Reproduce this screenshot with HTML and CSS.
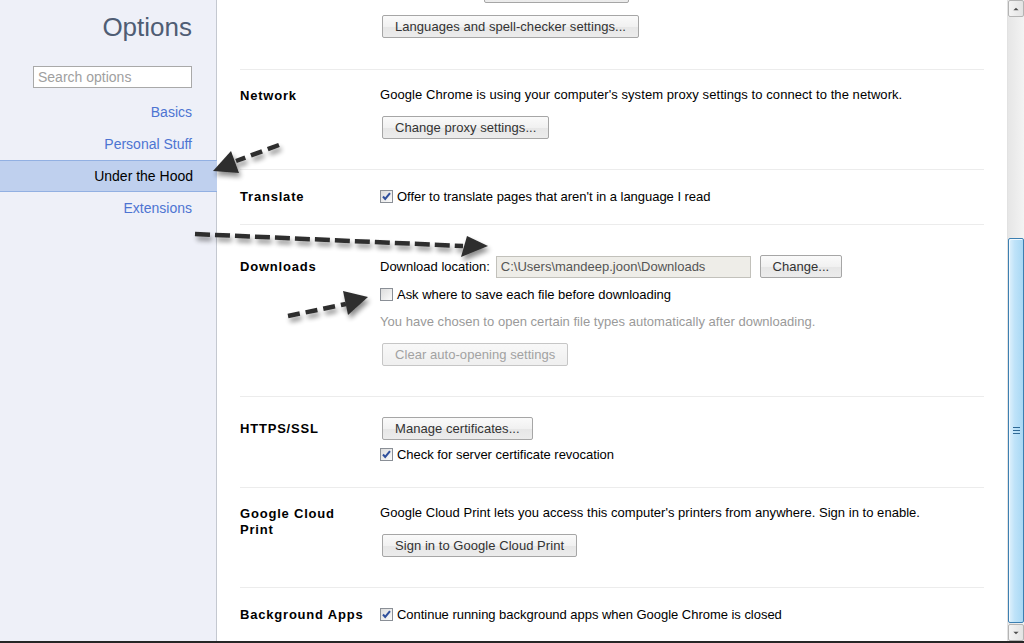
FILE: index.html
```html
<!DOCTYPE html>
<html>
<head>
<meta charset="utf-8">
<title>Options - Under the Hood</title>
<link rel="stylesheet" href="styles.css">
</head>
<body>
<div class="app">
  <aside class="sidebar">
    <h1 class="title">Options</h1>
    <div class="search-wrap"><input class="search" type="text" placeholder="Search options"></div>
    <nav class="nav">
      <a class="nav-item">Basics</a>
      <a class="nav-item">Personal Stuff</a>
      <a class="nav-item active">Under the Hood</a>
      <a class="nav-item">Extensions</a>
    </nav>
  </aside>

  <main class="main">
    <div class="content">
      <section class="section sec-first">
        <div class="label"></div>
        <div class="body">
          <button class="btn btn-fonts" aria-label="Customize fonts"></button>
          <button class="btn gap12">Languages and spell-checker settings...</button>
        </div>
      </section>

      <section class="section sec-network">
        <div class="label">Network</div>
        <div class="body">
          <div class="line wide">Google Chrome is using your computer's system proxy settings to connect to the network.</div>
          <button class="btn gap13">Change proxy settings...</button>
        </div>
      </section>

      <section class="section sec-translate">
        <div class="label">Translate</div>
        <div class="body">
          <label class="check-line"><span class="cb checked"><svg viewBox="0 0 13 13" width="13" height="13"><path d="M3 6.5 L5.2 9 L10 3.2" fill="none" stroke="#2f4f9c" stroke-width="2"/></svg></span>Offer to translate pages that aren't in a language I read</label>
        </div>
      </section>

      <section class="section sec-downloads">
        <div class="label label-mid">Downloads</div>
        <div class="body">
          <div class="dl-row">
            <span class="dl-label">Download location:</span>
            <span class="path">C:\Users\mandeep.joon\Downloads</span>
            <button class="btn btn-change">Change...</button>
          </div>
          <label class="check-line gap8"><span class="cb"></span>Ask where to save each file before downloading</label>
          <div class="line muted gap12">You have chosen to open certain file types automatically after downloading.</div>
          <button class="btn disabled gap13">Clear auto-opening settings</button>
        </div>
      </section>

      <section class="section sec-https">
        <div class="label label-mid">HTTPS/SSL</div>
        <div class="body">
          <button class="btn">Manage certificates...</button>
          <label class="check-line gap6"><span class="cb checked"><svg viewBox="0 0 13 13" width="13" height="13"><path d="M3 6.5 L5.2 9 L10 3.2" fill="none" stroke="#2f4f9c" stroke-width="2"/></svg></span>Check for server certificate revocation</label>
        </div>
      </section>

      <section class="section sec-cloud">
        <div class="label">Google Cloud<br>Print</div>
        <div class="body">
          <div class="line">Google Cloud Print lets you access this computer's printers from anywhere. Sign in to enable.</div>
          <button class="btn gap13">Sign in to Google Cloud Print</button>
        </div>
      </section>

      <section class="section sec-bg">
        <div class="label">Background Apps</div>
        <div class="body">
          <label class="check-line"><span class="cb checked"><svg viewBox="0 0 13 13" width="13" height="13"><path d="M3 6.5 L5.2 9 L10 3.2" fill="none" stroke="#2f4f9c" stroke-width="2"/></svg></span>Continue running background apps when Google Chrome is closed</label>
        </div>
      </section>
    </div>
  </main>

  <div class="scrollbar">
    <div class="sb-btn"><svg viewBox="0 0 16 16" width="16" height="16"><path d="M5 9.5 L8 6.5 L11 9.5 Z" fill="#4d4d4d"/></svg></div>
    <div class="sb-track">
      <div class="sb-thumb"><span class="grip"></span></div>
    </div>
    <div class="sb-btn"><svg viewBox="0 0 16 16" width="16" height="16"><path d="M5 6.5 L8 9.5 L11 6.5 Z" fill="#4d4d4d"/></svg></div>
  </div>
</div>
<div class="bottom-bar"></div>

<svg class="arrows" width="1024" height="643" viewBox="0 0 1024 643">
  <defs>
    <filter id="shadow" x="-20%" y="-50%" width="140%" height="200%">
      <feGaussianBlur in="SourceAlpha" stdDeviation="2.5"/>
      <feOffset dx="2" dy="4" result="b"/>
      <feComponentTransfer><feFuncA type="linear" slope="0.45"/></feComponentTransfer>
      <feMerge><feMergeNode/><feMergeNode in="SourceGraphic"/></feMerge>
    </filter>
  </defs>
  <g filter="url(#shadow)" fill="#2e2e2e" stroke="#2e2e2e">
    <line x1="279" y1="145" x2="236" y2="161" stroke-width="4.5" stroke-dasharray="12 6" fill="none"/>
    <polygon points="213,171 231,151 239,173" stroke="none"/>
    <line x1="195" y1="234" x2="463" y2="246" stroke-width="4.5" stroke-dasharray="15 5" fill="none"/>
    <polygon points="467,236 488,246 461,257" stroke="none"/>
    <line x1="288" y1="316" x2="346" y2="304" stroke-width="4.5" stroke-dasharray="12 6" fill="none"/>
    <polygon points="343,291 368,297 348,315" stroke="none"/>
  </g>
</svg>
</body>
</html>
```

FILE: styles.css
```css
* { box-sizing: border-box; }

html, body {
  margin: 0;
  padding: 0;
  width: 1024px;
  height: 643px;
  overflow: hidden;
  font-family: "Liberation Sans", Arial, sans-serif;
  font-size: 13px;
  color: #000;
  background: #fff;
}

.app {
  display: flex;
  height: 641px;
  position: relative;
}

/* Sidebar */
.sidebar {
  width: 217px;
  flex: 0 0 217px;
  background: #eef0f8;
  border-right: 1px solid #c4c8d0;
  display: flex;
  flex-direction: column;
}

.title {
  margin: 0;
  padding: 11px 24px 0 0;
  text-align: right;
  font-weight: normal;
  font-size: 26px;
  line-height: 32px;
  color: #4f5d74;
}

.search-wrap {
  padding: 23px 24px 0 33px;
}

.search {
  display: block;
  width: 159px;
  height: 22px;
  border: 1px solid #a9a9a9;
  background: #fff;
  padding: 0 0 0 4px;
  font-family: "Liberation Sans", Arial, sans-serif;
  font-size: 14px;
  color: #333;
  outline: none;
}
.search::placeholder { color: #a0a0a0; }

.nav {
  display: flex;
  flex-direction: column;
  margin-top: 8px;
}

.nav-item {
  display: block;
  height: 32px;
  line-height: 32px;
  text-align: right;
  padding-right: 24px;
  font-size: 14px;
  color: #4d74d2;
}

.nav-item.active {
  background: #bfd0ee;
  border-top: 1px solid #92b0e2;
  border-bottom: 1px solid #92b0e2;
  line-height: 30px;
  color: #000;
  margin-right: -1px;
}

/* Main */
.main {
  flex: 1;
  background: #fff;
  overflow: hidden;
}

.content {
  padding: 0 23px;
}

.section {
  display: grid;
  grid-template-columns: 140px 1fr;
  border-top: 1px solid #ececec;
}

.label {
  font-weight: bold;
  font-size: 13px;
  letter-spacing: 0.8px;
  line-height: 16px;
  color: #000;
  padding-top: 1px;
}
.label-mid { margin-top: 3px; }

.body {
  display: flex;
  flex-direction: column;
  align-items: flex-start;
}

.line {
  line-height: 16px;
  white-space: nowrap;
  letter-spacing: 0.03px;
}
.line.wide { letter-spacing: 0.07px; }

.muted { color: #9a9a9a; }

.sec-first { border-top: none; margin-top: -20px; padding-bottom: 31px; }
.sec-network { padding: 17px 0 30px; }
.sec-translate { padding: 18px 0 19px; }
.sec-downloads { padding: 30px 0 30px; }
.sec-https { padding: 20px 0 25px; }
.sec-cloud { padding: 17px 0 30px; }
.sec-bg { padding: 18px 0 20px; }

.gap6 { margin-top: 6px; }
.gap8 { margin-top: 8px; }
.gap12 { margin-top: 12px; }
.gap13 { margin-top: 13px; }

/* Buttons */
.btn {
  height: 23px;
  margin-left: 2px;
  padding: 0 12px;
  border: 1px solid #a6a6a6;
  border-radius: 2px;
  background: linear-gradient(to bottom, #fafafa 0%, #f1f1f1 50%, #e6e6e6 51%, #ececec 100%);
  font-family: "Liberation Sans", Arial, sans-serif;
  font-size: 13px;
  letter-spacing: 0.05px;
  color: #333;
  white-space: nowrap;
}
.btn.btn-fonts { margin-left: 104px; width: 145px; }
.btn.disabled {
  color: #a2a2a2;
  border-color: #c6c6c6;
  background: linear-gradient(to bottom, #f8f8f8, #efefef);
}

/* Checkbox */
.check-line {
  display: flex;
  align-items: center;
  height: 16px;
  white-space: nowrap;
  letter-spacing: -0.03px;
}

.cb {
  display: inline-block;
  width: 13px;
  height: 13px;
  margin-right: 4px;
  border: 1px solid #8a8f96;
  background: linear-gradient(135deg, #dcdcdc, #fbfbfb);
  position: relative;
}
.cb svg {
  position: absolute;
  left: -1px;
  top: -1px;
}

/* Downloads row */
.dl-row {
  display: flex;
  align-items: center;
  height: 23px;
}
.dl-label { margin-right: 6px; }
.path {
  display: inline-block;
  width: 255px;
  height: 22px;
  line-height: 20px;
  padding-left: 4px;
  border: 1px solid #c2c1bb;
  background: #eeede8;
  color: #555;
}
.btn.btn-change { margin-left: 9px; width: 82px; padding: 0; }

/* Scrollbar */
.scrollbar {
  width: 17px;
  flex: 0 0 17px;
  display: flex;
  flex-direction: column;
  background: #efefef;
  border-left: 1px solid #e2e2e2;
}

.sb-btn {
  height: 17px;
  flex: 0 0 17px;
  border: 1px solid #b4b4b4;
  border-radius: 2px;
  background: linear-gradient(to right, #f4f4f4, #e3e3e3);
  display: flex;
  align-items: center;
  justify-content: center;
}

.sb-track {
  flex: 1;
  padding-top: 221px;
  padding-bottom: 1px;
  background: linear-gradient(to right, #e6e6e6, #f3f3f3);
  display: flex;
  flex-direction: column;
}

.sb-thumb {
  flex: 1;
  border: 1px solid #3c7fb1;
  border-radius: 2px;
  background: linear-gradient(to right, #dff1fc 0%, #bfe3f9 40%, #a8d8f4 100%);
  box-shadow: inset 1px 1px 0 #f0f9ff;
  display: flex;
  align-items: center;
  justify-content: center;
}

.grip {
  width: 7px;
  height: 7px;
  border-top: 1px solid #2f6a96;
  border-bottom: 1px solid #2f6a96;
  background: linear-gradient(to bottom, transparent 2px, #2f6a96 2px, #2f6a96 3px, transparent 3px);
}

.bottom-bar {
  height: 2px;
  background: #262626;
}

/* Annotation arrows overlay */
.arrows {
  position: absolute;
  top: 0;
  left: 0;
  pointer-events: none;
}
```
